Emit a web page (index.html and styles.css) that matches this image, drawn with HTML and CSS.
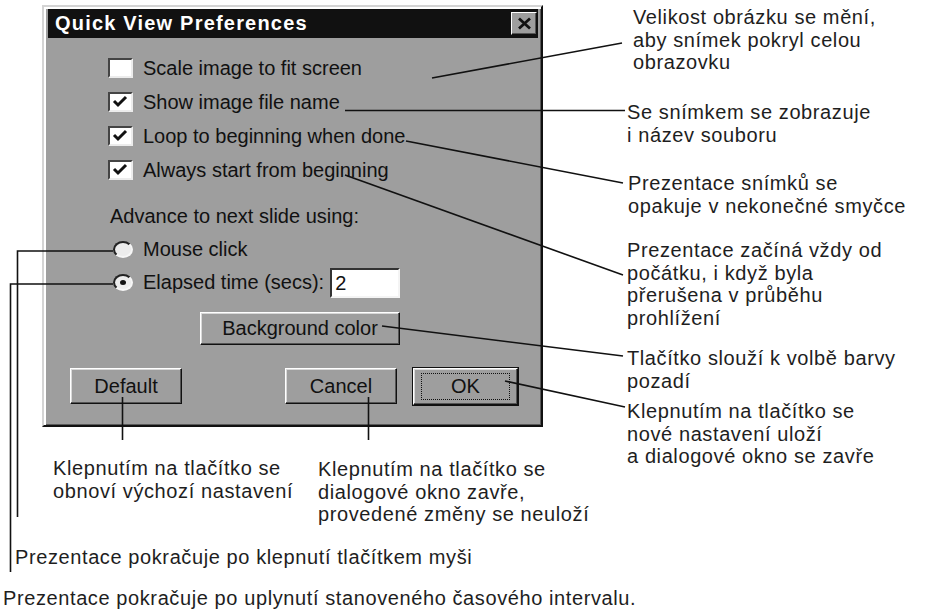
FILE: index.html
```html
<!DOCTYPE html>
<html lang="cs">
<head>
<meta charset="utf-8">
<title>Quick View Preferences</title>
<link rel="stylesheet" href="styles.css">
</head>
<body>
<div class="page">
  <div class="dialog">
    <div class="titlebar">
      <span class="title">Quick View Preferences</span>
      <span class="close"><svg width="15" height="13" viewBox="0 0 15 13"><path d="M2 1.5 L13 11.5 M13 1.5 L2 11.5" stroke="#111" stroke-width="2.8" fill="none"/></svg></span>
    </div>
    <div class="client">
      <div class="check-row"><span class="checkbox"></span><span>Scale image to fit screen</span></div>
      <div class="check-row"><span class="checkbox"><svg width="21" height="16" viewBox="0 0 21 16"><polyline points="4,7 8,11 16,3" stroke="#111" stroke-width="3" fill="none"/></svg></span><span>Show image file name</span></div>
      <div class="check-row"><span class="checkbox"><svg width="21" height="16" viewBox="0 0 21 16"><polyline points="4,7 8,11 16,3" stroke="#111" stroke-width="3" fill="none"/></svg></span><span>Loop to beginning when done</span></div>
      <div class="check-row"><span class="checkbox"><svg width="21" height="16" viewBox="0 0 21 16"><polyline points="4,7 8,11 16,3" stroke="#111" stroke-width="3" fill="none"/></svg></span><span>Always start from beginning</span></div>
      <div class="advance">Advance to next slide using:</div>
      <div class="radio-row first"><span class="radio"></span><span>Mouse click</span></div>
      <div class="radio-row"><span class="radio on"></span><span>Elapsed time (secs):</span><span class="input">2</span></div>
      <div class="bg-row"><span class="btn bg">Background color</span></div>
      <div class="btn-row">
        <span class="btn default">Default</span>
        <span class="btn cancel">Cancel</span>
        <span class="btn ok"><span class="focus">OK</span></span>
      </div>
    </div>
  </div>

  <div class="note n-a">Velikost obrázku se mění,<br>aby snímek pokryl celou<br>obrazovku</div>
  <div class="note n-b">Se snímkem se zobrazuje<br>i název souboru</div>
  <div class="note n-c">Prezentace snímků se<br>opakuje v nekonečné smyčce</div>
  <div class="note n-d">Prezentace začíná vždy od<br>počátku, i když byla<br>přerušena v průběhu<br>prohlížení</div>
  <div class="note n-e">Tlačítko slouží k volbě barvy<br>pozadí</div>
  <div class="note n-f">Klepnutím na tlačítko se<br>nové nastavení uloží<br>a dialogové okno se zavře</div>
  <div class="note n-g">Klepnutím na tlačítko se<br>obnoví výchozí nastavení</div>
  <div class="note n-h">Klepnutím na tlačítko se<br>dialogové okno zavře,<br>provedené změny se neuloží</div>
  <div class="note n-i">Prezentace pokračuje po klepnutí tlačítkem myši</div>
  <div class="note n-j">Prezentace pokračuje po uplynutí stanoveného časového intervalu.</div>

  <svg class="leaders" width="932" height="612" viewBox="0 0 932 612">
    <g stroke="#111" stroke-width="1.6" fill="none">
      <path d="M432 78 L622 43"/>
      <path d="M345 110.5 L625 110.5"/>
      <path d="M406 141 L623 183"/>
      <path d="M345 175 L623 275"/>
      <path d="M382 326 L623 356"/>
      <path d="M505 381 L625 407"/>
      <path d="M122.5 397 L122.5 440"/>
      <path d="M368.5 397 L368.5 440"/>
      <path d="M113 251 H17.5 V517"/>
      <path d="M113 284 H10.5 V572"/>
    </g>
  </svg>
</div>
</body>
</html>
```
FILE: styles.css
```css
* { box-sizing: border-box; }
html, body { margin: 0; padding: 0; background: #fff; }
body {
  width: 932px;
  height: 612px;
  overflow: hidden;
  font-family: "Liberation Sans", Arial, sans-serif;
}
.page {
  position: relative;
  width: 932px;
  height: 612px;
  padding: 5px 0 0 42px;
}
.dialog {
  width: 501px;
  height: 422px;
  background: #9e9e9e;
  border: 2px solid;
  border-color: #d4d4d4 #111 #111 #d4d4d4;
  box-shadow: inset 2px 2px 0 #fff, inset -1px -1px 0 #5a5a5a;
  padding: 2px 3px 0 4px;
  display: flex;
  flex-direction: column;
}
.titlebar {
  height: 29px;
  background: #111;
  display: flex;
  align-items: center;
  justify-content: space-between;
  padding: 0 1px 0 7px;
}
.title {
  color: #fff;
  font-weight: bold;
  font-size: 20px;
  letter-spacing: 1.2px;
}
.close {
  width: 26px;
  height: 23px;
  background: #9e9e9e;
  border: 1px solid;
  border-color: #fff #111 #111 #fff;
  box-shadow: inset -1px -1px 0 #555;
  display: flex;
  align-items: center;
  justify-content: center;
}
.client {
  padding-top: 13px;
  color: #111;
  font-size: 20px;
}
.check-row {
  height: 34px;
  display: flex;
  align-items: center;
  padding-left: 60px;
}
.checkbox {
  width: 25px;
  height: 20px;
  margin-right: 10px;
  border: 2px solid;
  border-color: #444 #ececec #ececec #444;
  background: #fff;
  display: flex;
  align-items: center;
  justify-content: center;
}
.advance {
  margin-top: 17px;
  height: 24px;
  line-height: 24px;
  padding-left: 62px;
}
.radio-row {
  height: 33px;
  display: flex;
  align-items: center;
  padding-left: 65px;
}
.radio-row.first { margin-top: 5px; }
.radio {
  position: relative;
  width: 20px;
  height: 17px;
  margin-right: 10px;
  border-radius: 50%;
  border: 2px solid;
  border-color: #222 #f6f6f6 #f6f6f6 #222;
  background: #ececec;
}
.radio.on::after {
  content: "";
  position: absolute;
  left: 5px;
  top: 4px;
  width: 6px;
  height: 5px;
  border-radius: 50%;
  background: #111;
}
.input {
  width: 70px;
  height: 30px;
  margin-left: 6px;
  border: 2px solid;
  border-color: #333 #f4f4f4 #f4f4f4 #333;
  background: #fff;
  padding-left: 3px;
  line-height: 26px;
}
.bg-row {
  margin-top: 13px;
  padding-left: 152px;
  display: flex;
}
.btn {
  display: flex;
  align-items: center;
  justify-content: center;
  background: #9e9e9e;
  border: 1px solid;
  border-color: #fff #111 #111 #fff;
  box-shadow: inset -1px -1px 0 #555, inset 1px 1px 0 #d8d8d8;
  color: #111;
}
.btn.bg { width: 200px; height: 33px; }
.btn-row {
  margin-top: 23px;
  display: flex;
  align-items: flex-start;
}
.btn.default { width: 112px; height: 36px; margin-left: 22px; }
.btn.cancel { width: 112px; height: 36px; margin-left: 103px; }
.btn.ok {
  width: 105px;
  height: 37px;
  margin-left: 16px;
  outline: 1px solid #111;
  padding: 4px 7px;
}
.focus {
  width: 100%;
  height: 100%;
  border: 1px dotted #111;
  display: flex;
  align-items: center;
  justify-content: center;
}
.note {
  position: absolute;
  color: #1e1e1e;
  font-size: 20px;
  letter-spacing: 0.6px;
  line-height: 22.5px;
  white-space: nowrap;
}
.n-a { left: 633px; top: 6px; }
.n-b { left: 627px; top: 101px; }
.n-c { left: 628px; top: 172px; }
.n-d { left: 627px; top: 239px; }
.n-e { left: 627px; top: 347px; }
.n-f { left: 627px; top: 400px; }
.n-g { left: 53px; top: 457px; }
.n-h { left: 318px; top: 458px; }
.n-i { left: 15px; top: 546px; }
.n-j { left: 3px; top: 587px; }
.leaders {
  position: absolute;
  left: 0;
  top: 0;
  pointer-events: none;
}
```
